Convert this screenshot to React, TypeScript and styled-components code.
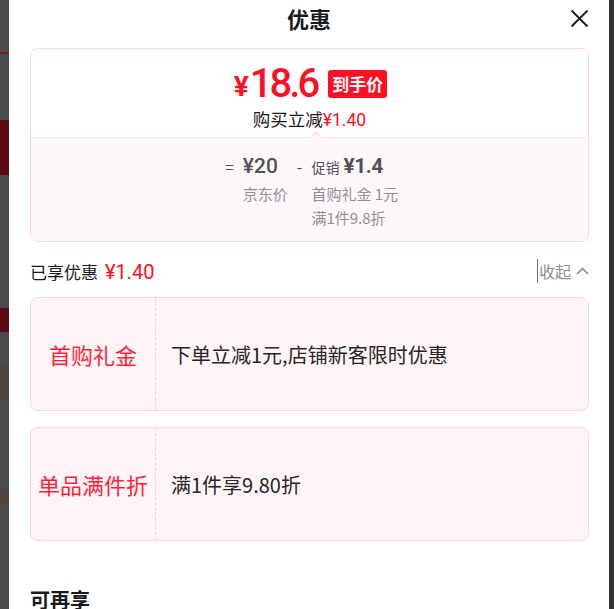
import React from 'react'
import styled, { createGlobalStyle } from 'styled-components'

const GlobalStyle = createGlobalStyle`
  html, body {
    margin: 0;
    padding: 0;
    height: 100%;
    overflow: hidden;
    background: #333;
  }
  body {
    font-family: "Noto Sans CJK SC", "Noto Sans", sans-serif;
    color: #1a1a1a;
  }
`

const Page = styled.div`
  display: flex;
  width: 614px;
  height: 609px;
  background: #333;
`
const Backdrop = styled.div`
  width: 9px;
  display: flex;
  flex-direction: column;
  background: #4b4b4b;
  overflow: hidden;
`
const BackdropBlock = styled.div<{ $h: number; $bg: string }>`
  height: ${(p) => p.$h}px;
  background: ${(p) => p.$bg};
  flex-shrink: 0;
`
const Panel = styled.div`
  width: 600px;
  background: #fff;
  display: flex;
  flex-direction: column;
  overflow: hidden;
`
const Header = styled.div`
  display: grid;
  grid-template-columns: 1fr auto 1fr;
  align-items: center;
  height: 36px;
`
const Title = styled.h1`
  grid-column: 2;
  margin: 0;
  font-size: 22px;
  font-weight: 700;
  line-height: 36px;
  color: #1a1a1a;
`
const CloseButton = styled.button`
  justify-self: end;
  margin-right: 20px;
  padding: 0;
  border: none;
  background: none;
  width: 19px;
  height: 19px;
  display: flex;
  align-items: center;
  justify-content: center;
  cursor: pointer;
`
const Body = styled.div`
  padding: 12px 20px 0 21px;
  display: flex;
  flex-direction: column;
`
const PriceCard = styled.div`
  border: 1px solid #ffd7e0;
  border-radius: 8px;
  overflow: hidden;
`
const PriceTop = styled.div`
  display: flex;
  flex-direction: column;
  align-items: center;
  padding: 17px 0 6px;
`
const PriceRow = styled.div`
  display: flex;
  align-items: center;
  height: 36px;
  margin-left: 2px;
`
const Yuan = styled.span`
  font-family: Roboto, sans-serif;
  font-weight: 700;
  font-size: 28px;
  color: #ff0f23;
  align-self: flex-end;
  line-height: 28px;
  margin-bottom: 1px;
  margin-right: 1px;
`
const BigPrice = styled.span`
  font-family: Roboto, sans-serif;
  font-weight: 500;
  font-size: 40px;
  letter-spacing: -3px;
  line-height: 36px;
  color: #ff0f23;
`
const Badge = styled.span`
  margin-left: 11px;
  height: 28px;
  padding: 0 4px;
  border-radius: 3px;
  background: #ff0f23;
  color: #fff;
  font-size: 17px;
  font-weight: 700;
  line-height: 28px;
`
const Saved = styled.div`
  margin-top: 6px;
  font-size: 17.5px;
  line-height: 22px;
  color: #1a1a1a;
`
const Red = styled.span<{ $size?: number }>`
  font-family: Roboto, sans-serif;
  color: #ff0f23;
  font-size: ${(p) => (p.$size ? `${p.$size}px` : 'inherit')};
`
const PriceBottom = styled.div`
  position: relative;
  background: #fff8f9;
  border-top: 1px solid #ffe3e9;
  padding: 16px 0 11px 4px;
  display: flex;
  justify-content: center;
  gap: 9px;

  &::before {
    content: '';
    position: absolute;
    top: -5px;
    left: calc(50% + 2px);
    width: 8px;
    height: 8px;
    background: #fff8f9;
    border-top: 1px solid #ffd7e0;
    border-left: 1px solid #ffd7e0;
    transform: rotate(45deg);
  }
`
const Operator = styled.span`
  font-size: 16px;
  line-height: 24px;
  color: #505259;
`
const Formula = styled.div`
  display: flex;
  flex-direction: column;
`
const FormulaValue = styled.div`
  display: flex;
  align-items: baseline;
  gap: 4px;
  height: 24px;
  line-height: 24px;
  margin-bottom: 4px;
  color: #505259;
`
const Amount = styled.span<{ $bold?: boolean }>`
  font-family: Roboto, sans-serif;
  font-size: 21px;
  font-weight: ${(p) => (p.$bold ? 700 : 500)};
  letter-spacing: ${(p) => (p.$bold ? '-0.5px' : '0')};
`
const SmallTag = styled.span`
  font-size: 14px;
`
const FormulaLabel = styled.div`
  font-size: 15px;
  line-height: 24px;
  color: #8c8f99;
  white-space: nowrap;
`
const SummaryRow = styled.div`
  display: flex;
  align-items: center;
  justify-content: space-between;
  height: 30px;
  margin: 14px 0 11px;
`
const SummaryText = styled.div`
  font-size: 17px;
  color: #1a1a1a;
  display: flex;
  align-items: baseline;
  gap: 7px;
`
const Toggle = styled.button`
  display: flex;
  align-items: center;
  gap: 5px;
  border: none;
  background: none;
  padding: 0;
  font-family: inherit;
  font-size: 16px;
  color: #8a8d96;
  cursor: pointer;
  border-left: 1px solid #6a6d76;
  padding-left: 1px;
  height: 24px;
`
const CouponList = styled.div`
  display: flex;
  flex-direction: column;
  gap: 16px;
`
const Coupon = styled.div`
  display: grid;
  grid-template-columns: 125px 1fr;
  height: 114px;
  box-sizing: border-box;
  border: 1px solid #ffd3dd;
  border-radius: 8px;
  background: #fff5f6;
`
const CouponName = styled.div`
  display: flex;
  align-items: center;
  justify-content: center;
  border-right: 1px dashed #ffc9d5;
  font-size: 22px;
  color: #ff1f3a;
  white-space: nowrap;
`
const CouponDesc = styled.div`
  display: flex;
  align-items: center;
  padding-left: 15px;
  font-size: 20px;
  color: #262626;
`
const Divider = styled.div`
  height: 11px;
  background: #f3f4f8;
  margin-top: 19px;
`
const Section = styled.div`
  padding: 28px 21px 20px;
`
const SectionTitle = styled.h2`
  margin: 0;
  font-size: 20px;
  font-weight: 700;
  line-height: 24px;
  color: #1a1a1a;
`

const backdrop = [
  { h: 52, bg: '#4b4b4b' },
  { h: 2, bg: '#7a1a1e' },
  { h: 66, bg: '#4b4b4b' },
  { h: 55, bg: '#5a0a10' },
  { h: 133, bg: '#4b4b4b' },
  { h: 24, bg: '#5a0a10' },
  { h: 33, bg: '#4b4b4b' },
  { h: 35, bg: '#4f4640' },
  { h: 88, bg: '#4b4b4b' },
  { h: 16, bg: '#4e463c' },
  { h: 105, bg: '#4b4b4b' },
]

const coupons = [
  { name: '首购礼金', desc: '下单立减1元,店铺新客限时优惠' },
  { name: '单品满件折', desc: '满1件享9.80折' },
]

const App: React.FC = () => {
  return (
    <>
      <GlobalStyle />
      <Page>
        <Backdrop>
          {backdrop.map((b, i) => (
            <BackdropBlock key={i} $h={b.h} $bg={b.bg} />
          ))}
        </Backdrop>
        <Panel>
          <Header>
            <Title>优惠</Title>
            <CloseButton aria-label='关闭'>
              <svg width='19' height='19' viewBox='0 0 19 19'>
                <path d='M1.5 1.5 L17.5 17.5 M17.5 1.5 L1.5 17.5' stroke='#1a1a1a' strokeWidth='1.8' />
              </svg>
            </CloseButton>
          </Header>
          <Body>
            <PriceCard>
              <PriceTop>
                <PriceRow>
                  <Yuan>¥</Yuan>
                  <BigPrice>18.6</BigPrice>
                  <Badge>到手价</Badge>
                </PriceRow>
                <Saved>
                  购买立减<Red>¥1.40</Red>
                </Saved>
              </PriceTop>
              <PriceBottom>
                <Operator>=</Operator>
                <Formula>
                  <FormulaValue>
                    <Amount>¥20</Amount>
                  </FormulaValue>
                  <FormulaLabel>京东价</FormulaLabel>
                </Formula>
                <Operator>-</Operator>
                <Formula>
                  <FormulaValue>
                    <SmallTag>促销</SmallTag>
                    <Amount $bold>¥1.4</Amount>
                  </FormulaValue>
                  <FormulaLabel>首购礼金 1元</FormulaLabel>
                  <FormulaLabel>满1件9.8折</FormulaLabel>
                </Formula>
              </PriceBottom>
            </PriceCard>

            <SummaryRow>
              <SummaryText>
                已享优惠<Red $size={20}>¥1.40</Red>
              </SummaryText>
              <Toggle>
                收起
                <svg width='13' height='8' viewBox='0 0 13 8'>
                  <path d='M1 7 L6.5 1.5 L12 7' fill='none' stroke='#8a8d96' strokeWidth='1.6' />
                </svg>
              </Toggle>
            </SummaryRow>

            <CouponList>
              {coupons.map((c) => (
                <Coupon key={c.name}>
                  <CouponName>{c.name}</CouponName>
                  <CouponDesc>{c.desc}</CouponDesc>
                </Coupon>
              ))}
            </CouponList>
          </Body>
          <Divider />
          <Section>
            <SectionTitle>可再享</SectionTitle>
          </Section>
        </Panel>
      </Page>
    </>
  )
}

export default App
